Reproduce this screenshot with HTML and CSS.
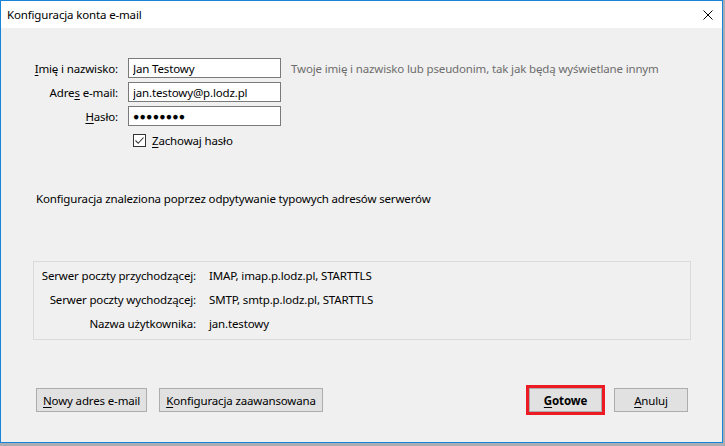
FILE: index.html
```html
<!DOCTYPE html>
<html lang="pl">
<head>
  <meta charset="UTF-8">
  <title>Konfiguracja konta e-mail</title>
  <link rel="stylesheet" href="styles.css">
</head>
<body>
  <div class="window">
    <div class="titlebar">
      <span class="title">Konfiguracja konta e-mail</span>
      <svg class="close" width="10" height="10" viewBox="0 0 10 10">
        <path d="M0.5 0.5 L9.5 9.5 M9.5 0.5 L0.5 9.5" stroke="#000" stroke-width="1" fill="none"/>
      </svg>
    </div>

    <div class="content">
      <div class="form">
        <label class="lbl" for="name"><span><u>I</u>mię i nazwisko:</span></label>
        <input class="field" id="name" type="text" value="Jan Testowy">
        <span class="hint">Twoje imię i nazwisko lub pseudonim, tak jak będą wyświetlane innym</span>

        <label class="lbl" for="email"><span>Adre<u>s</u> e-mail:</span></label>
        <input class="field" id="email" type="text" value="jan.testowy@p.lodz.pl">
        <span></span>

        <label class="lbl" for="pass"><span><u>H</u>asło:</span></label>
        <input class="field pass" id="pass" type="text" value="●●●●●●●●">
        <span></span>

        <span></span>
        <label class="remember">
          <span class="check">
            <svg width="11" height="11" viewBox="0 0 11 11">
              <path d="M1.5 5.5 L4.2 8.3 L9.5 2.5" stroke="#333" stroke-width="1.1" fill="none"/>
            </svg>
          </span>
          <span><u>Z</u>achowaj hasło</span>
        </label>
        <span></span>
      </div>

      <p class="status">Konfiguracja znaleziona poprzez odpytywanie typowych adresów serwerów</p>

      <div class="servers">
        <span class="key">Serwer poczty przychodzącej:</span>
        <span>IMAP, imap.p.lodz.pl, STARTTLS</span>
        <span class="key">Serwer poczty wychodzącej:</span>
        <span>SMTP, smtp.p.lodz.pl, STARTTLS</span>
        <span class="key">Nazwa użytkownika:</span>
        <span>jan.testowy</span>
      </div>

      <div class="actions">
        <button class="btn"><u>N</u>owy adres e-mail</button>
        <button class="btn"><u>K</u>onfiguracja zaawansowana</button>
        <div class="spacer"></div>
        <button class="btn btn-done"><u>G</u>otowe</button>
        <button class="btn btn-cancel"><u>A</u>nuluj</button>
      </div>
    </div>
  </div>
</body>
</html>
```

FILE: styles.css
```css
* {
  margin: 0;
  padding: 0;
  box-sizing: border-box;
}

body {
  font-family: 'Segoe UI', 'Noto Sans', sans-serif;
  font-size: 11.5px;
  letter-spacing: -0.15px;
  color: #000;
  background: #aaadb3;
  width: 725px;
  height: 446px;
  overflow: hidden;
}

u {
  text-decoration: underline;
  text-underline-offset: 2px;
}

.window {
  width: 723px;
  height: 443px;
  border: 1px solid #1883d7;
  background: #f0f0f0;
  display: flex;
  flex-direction: column;
}

.titlebar {
  height: 27px;
  background: #fff;
  display: flex;
  align-items: center;
  justify-content: space-between;
  padding: 0 9px 0 6px;
}

.content {
  flex: 1;
  display: flex;
  flex-direction: column;
}

.form {
  display: grid;
  grid-template-columns: 98px 153px auto;
  grid-auto-rows: 20px;
  column-gap: 10px;
  row-gap: 4px;
  margin-top: 30px;
  padding-left: 19px;
}

.lbl {
  display: flex;
  align-items: center;
  justify-content: flex-end;
  white-space: nowrap;
}

.field {
  font: inherit;
  letter-spacing: inherit;
  height: 20px;
  width: 153px;
  border: 1px solid #7a7a7a;
  background: #fff;
  padding: 0 4px;
  outline: none;
  color: #000;
}

.field.pass {
  font-size: 10.5px;
  letter-spacing: 0.2px;
}

.hint {
  display: flex;
  align-items: center;
  color: #6d6d6d;
  white-space: nowrap;
}

.remember {
  display: flex;
  align-items: center;
  gap: 6px;
  padding-left: 5px;
}

.check {
  width: 13px;
  height: 13px;
  border: 1px solid #333;
  background: #fff;
  display: flex;
  align-items: center;
  justify-content: center;
}

.status {
  margin-top: 40px;
  padding-left: 35px;
  line-height: 17px;
}

.servers {
  display: grid;
  grid-template-columns: 162px auto;
  grid-auto-rows: 24px;
  column-gap: 13px;
  align-items: center;
  width: 658px;
  height: 79px;
  margin: 54px 0 0 32px;
  padding: 1px 0 4px;
  border: 1px solid #dadada;
}

.servers .key {
  text-align: right;
  white-space: nowrap;
}

.actions {
  display: flex;
  gap: 12px;
  margin-top: 48px;
  padding: 0 34px 0 35px;
}

.spacer {
  flex: 1;
}

.btn {
  font: inherit;
  letter-spacing: inherit;
  color: #000;
  height: 24px;
  padding: 0 6px;
  background: #e1e1e1;
  border: 1px solid #adadad;
  white-space: nowrap;
}

.btn-done {
  width: 73px;
  font-weight: bold;
  outline: 3px solid #ec1c24;
}

.btn-cancel {
  width: 74px;
}
```
